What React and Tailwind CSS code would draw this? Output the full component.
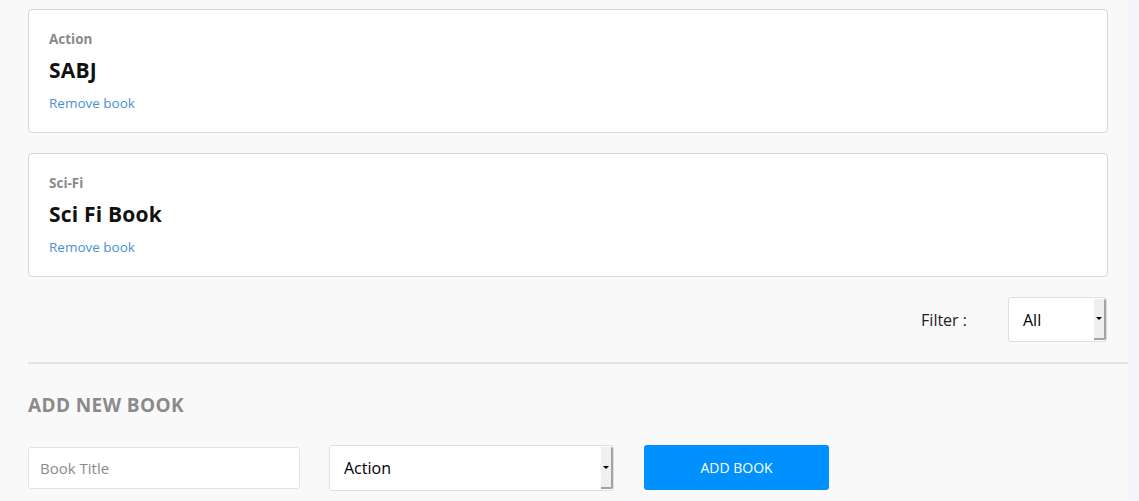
import React from 'react'

const books = [
  { id: 1, genre: 'Action', title: 'SABJ' },
  { id: 2, genre: 'Sci-Fi', title: 'Sci Fi Book' },
]

function FakeSelect({ value, className }) {
  return (
    <div className={`flex items-stretch bg-white border border-[#dedede] rounded-[3px] ${className}`}>
      <div className="flex-1 flex items-center pl-[14px] text-[16px] text-black">{value}</div>
      <div className="w-[12px] my-[1px] bg-[#efefef] border-r-2 border-b-2 border-[#a3a3a3] rounded-tr-[2px] rounded-br-[2px] flex items-center justify-center">
        <div className="w-0 h-0 border-l-[3px] border-r-[3px] border-t-[3px] border-l-transparent border-r-transparent border-t-black" />
      </div>
    </div>
  )
}

export default function App() {
  return (
    <div className="flex min-h-[501px] bg-[#f4f5f9]" style={{ fontFamily: '"Open Sans", "Noto Sans", sans-serif' }}>
      <div className="w-[1128px] bg-[#f9f9f9] pt-[9px]">
        <div className="pl-[28px] pr-[20px]">
          {books.map((book, i) => (
            <div
              key={book.id}
              className={`bg-white border border-[#d6d6d6] rounded-[4px] pl-[20px] pt-[20px] pb-[20px] ${i > 0 ? 'mt-[20px]' : ''}`}
            >
              <div className="text-[13.5px] leading-[18px] font-bold text-[#8a8a8a]">{book.genre}</div>
              <div className="mt-[9px] text-[21px] leading-[26px] font-bold text-[#111] tracking-[0.2px]">{book.title}</div>
              <div className="mt-[11px] text-[13.5px] leading-[18px] text-[#4a90d6]">Remove book</div>
            </div>
          ))}

          <div className="mt-[20px] flex items-center justify-end pr-[1px]">
            <span className="text-[16px] text-[#222] mr-[41px]">Filter :</span>
            <FakeSelect value="All" className="w-[99px] h-[45px]" />
          </div>
        </div>

        <div className="ml-[28px] mt-[20px] h-[2px] bg-[#e4e4e4]" />

        <div className="px-[28px]">
          <h2 className="mt-[29px] text-[19px] leading-[24px] font-bold text-[#8a8a8a] tracking-[0.4px]">ADD NEW BOOK</h2>
          <div className="mt-[28px] flex items-start">
            <input
              type="text"
              placeholder="Book Title"
              className="mt-[2px] w-[272px] h-[42px] bg-white border border-[#e3e3e3] rounded-[3px] pl-[11px] text-[15px] placeholder:text-[#8a8a8a] outline-none"
            />
            <FakeSelect value="Action" className="ml-[29px] w-[285px] h-[46px]" />
            <button className="ml-[30px] w-[185px] h-[45px] bg-[#0091ff] rounded-[3px] text-white text-[14px]">
              ADD BOOK
            </button>
          </div>
        </div>
      </div>
      <div className="flex-1" />
    </div>
  )
}
